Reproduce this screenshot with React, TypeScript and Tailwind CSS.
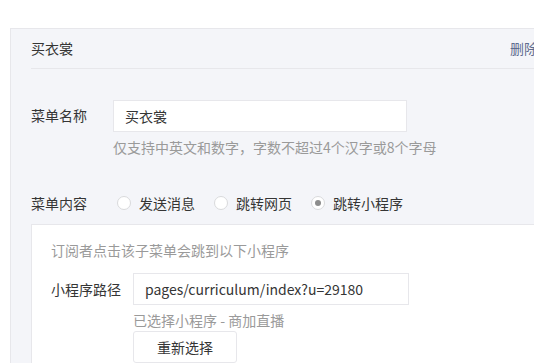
const font = "font-['Microsoft_YaHei','Noto_Sans_CJK_SC',sans-serif]";

function Radio({ label, checked }: { label: string; checked?: boolean }) {
  return (
    <label className="flex items-center gap-[8px]">
      <span className="flex h-[14px] w-[14px] items-center justify-center rounded-full border border-[#d9dadc] bg-white">
        {checked && <span className="h-[6px] w-[6px] rounded-full bg-[#8d8d8d]" />}
      </span>
      <span className="text-[14px] leading-[20px] text-[#353535]">{label}</span>
    </label>
  );
}

export default function App() {
  return (
    <div className={`h-[363px] w-[534px] overflow-hidden bg-white pt-[28px] pl-[10px] ${font}`}>
      <div className="w-[580px] h-[400px] border-t border-l border-[#e7e7eb] bg-[#f4f5f9] pl-[20px]">
        <div className="flex h-[40px] items-center justify-between border-b border-[#e7e7eb] pr-[52px]">
          <div className="text-[14px] text-[#353535]">买衣裳</div>
          <div className="text-[14px] text-[#5f6c8f]">删除</div>
        </div>

        <div className="mt-[31px] flex">
          <div className="w-[82px] pt-[5px] text-[14px] leading-[20px] text-[#353535]">菜单名称</div>
          <div className="flex flex-col">
            <div className="flex h-[32px] w-[294px] items-center border border-[#e7e7eb] bg-white px-[11px] text-[14px] text-[#353535]">
              买衣裳
            </div>
            <div className="mt-[5px] text-[14px] leading-[20px] text-[#9a9a9a]">
              仅支持中英文和数字，字数不超过4个汉字或8个字母
            </div>
          </div>
        </div>

        <div className="mt-[36px] flex items-center">
          <div className="w-[86px] text-[14px] leading-[20px] text-[#353535]">菜单内容</div>
          <div className="flex items-center gap-[19px]">
            <Radio label="发送消息" />
            <Radio label="跳转网页" />
            <Radio label="跳转小程序" checked />
          </div>
        </div>

        <div className="mt-[11px] h-[200px] border border-[#e7e7eb] bg-white pt-[15px] pl-[19px]">
          <div className="text-[14px] leading-[20px] text-[#9a9a9a]">订阅者点击该子菜单会跳到以下小程序</div>
          <div className="mt-[13px] flex">
            <div className="w-[82px] pt-[6px] text-[14px] leading-[20px] text-[#353535]">小程序路径</div>
            <div className="flex flex-col items-start">
              <div className="flex h-[32px] w-[276px] items-center border border-[#e7e7eb] bg-white px-[11px] text-[14px] text-[#353535]">
                pages/curriculum/index?u=29180
              </div>
              <div className="mt-[5px] text-[14px] leading-[20px] text-[#9a9a9a]">已选择小程序 - 商加直播</div>
              <button className="mt-[1px] flex h-[32px] w-[104px] items-center justify-center rounded-[3px] border border-[#e7e7eb] bg-white text-[14px] text-[#353535]">
                重新选择
              </button>
            </div>
          </div>
        </div>
      </div>
    </div>
  );
}
